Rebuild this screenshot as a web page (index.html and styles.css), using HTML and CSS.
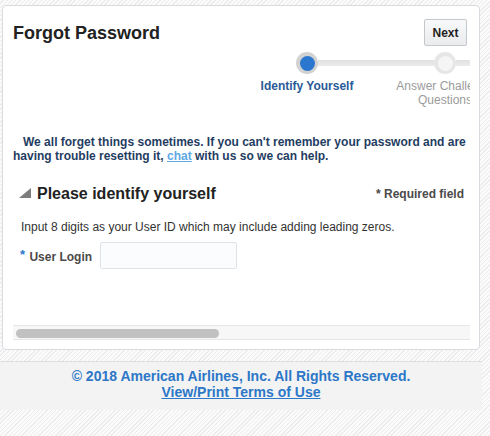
FILE: index.html
```html
<!DOCTYPE html>
<html lang="en">
<head>
<meta charset="utf-8">
<title>Forgot Password</title>
<link rel="stylesheet" href="styles.css">
</head>
<body>
<div class="page">
  <div class="card">
    <div class="viewport">
      <div class="header">
        <h1 class="title">Forgot Password</h1>
        <button class="btn" type="button">Next</button>
      </div>
      <div class="train">
        <div class="step current">
          <div class="knob-row">
            <span class="seg seg-none"></span>
            <span class="knob"><span class="dot"></span></span>
            <span class="seg"></span>
          </div>
          <div class="step-label">Identify Yourself</div>
        </div>
        <div class="step">
          <div class="knob-row">
            <span class="seg"></span>
            <span class="knob"><span class="dot"></span></span>
            <span class="seg"></span>
          </div>
          <div class="step-label">Answer Challenge Questions</div>
        </div>
      </div>
      <p class="intro">We all forget things sometimes. If you can't remember your password and are<br>having trouble resetting it, <a href="#" class="chat">chat</a> with us so we can help.</p>
      <div class="section">
        <div class="section-head">
          <h2 class="section-title"><svg class="disclosure" width="12" height="10" viewBox="0 0 12 10"><polygon points="12,0 12,10 0,10" fill="#7d7d7d"/></svg>Please identify yourself</h2>
          <span class="req">* Required field</span>
        </div>
        <p class="hint">Input 8 digits as your User ID which may include adding leading zeros.</p>
        <div class="field">
          <label class="field-label" for="login"><span class="star">*</span> User Login</label>
          <input class="input" id="login" type="text">
        </div>
      </div>
    </div>
    <div class="hscroll"><div class="thumb"></div></div>
  </div>
  <div class="footer">
    <div class="copy">© 2018 American Airlines, Inc. All Rights Reserved.</div>
    <a href="#" class="terms">View/Print Terms of Use</a>
  </div>
</div>
</body>
</html>
```

FILE: styles.css
```css
html, body {
  margin: 0;
  padding: 0;
}
body {
  font-family: "Liberation Sans", Arial, Helvetica, sans-serif;
  color: #333;
  height: 436px;
  background: repeating-linear-gradient(135deg, #fbfbfb 0 2px, #ececec 2px 3px);
}
.page {
  width: 482px;
  padding-top: 5px;
}
.card {
  margin-left: 2px;
  width: 478px;
  height: 345px;
  box-sizing: border-box;
  border: 1px solid #d8dce1;
  border-radius: 4px;
  background: #fff;
  display: flex;
  flex-direction: column;
  padding: 13px 9px 9px 10px;
}
.viewport {
  overflow: hidden;
  width: 457px;
}
.header {
  display: flex;
  justify-content: space-between;
  align-items: center;
  padding-right: 3px;
}
.title {
  margin: 0;
  font-size: 18px;
  line-height: 22px;
  font-weight: bold;
  color: #222;
}
.btn {
  width: 43px;
  height: 27px;
  padding: 0;
  border: 1px solid #c4c8cd;
  border-radius: 2px;
  background: linear-gradient(#f8f9fa, #e9ebed);
  font-family: inherit;
  font-size: 12px;
  font-weight: bold;
  color: #1f1f1f;
}
.train {
  display: flex;
  margin-top: 6px;
  margin-left: 225px;
  width: 276px;
}
.step {
  width: 138px;
  flex: none;
  display: flex;
  flex-direction: column;
  align-items: center;
}
.knob-row {
  display: flex;
  align-items: center;
  width: 100%;
  height: 22px;
}
.seg {
  flex: 1;
  height: 6px;
  background: linear-gradient(#e0e0e0, #ececec);
}
.seg-none {
  background: transparent;
}
.knob {
  width: 22px;
  height: 22px;
  border-radius: 50%;
  background: #e6e6e6;
  display: flex;
  align-items: center;
  justify-content: center;
  flex: none;
}
.dot {
  width: 15px;
  height: 15px;
  border-radius: 50%;
  background: #f5f5f5;
}
.current .knob {
  background: #d2d2d2;
}
.current .dot {
  background: #2b76cf;
}
.step-label {
  margin-top: 5px;
  font-size: 12px;
  line-height: 14px;
  color: #9b9b9b;
  text-align: center;
  width: 120px;
}
.current .step-label {
  font-weight: bold;
  color: #2b5b97;
  width: 138px;
}
.intro {
  margin: 28px 0 0;
  font-size: 12px;
  line-height: 14px;
  font-weight: bold;
  color: #1f3d62;
  text-indent: 10px;
  white-space: nowrap;
}
.chat {
  color: #5fa8e6;
  text-decoration: underline;
}
.section {
  margin-top: 20px;
  padding: 0 6px;
}
.section-head {
  display: flex;
  justify-content: space-between;
  align-items: center;
  height: 22px;
}
.section-title {
  margin: 0;
  font-size: 16px;
  line-height: 20px;
  font-weight: bold;
  color: #222;
  display: flex;
  align-items: center;
  gap: 6px;
}
.disclosure {
  display: block;
  margin-top: -2px;
}
.req {
  font-size: 12px;
  font-weight: bold;
  color: #4a4a4a;
}
.hint {
  margin: 15px 0 0 2px;
  font-size: 12px;
  line-height: 14px;
  color: #333;
}
.field {
  margin-top: 8px;
  display: flex;
  align-items: center;
  gap: 8px;
  padding-left: 1px;
}
.field-label {
  font-size: 12px;
  font-weight: bold;
  color: #4a4a4a;
}
.star {
  color: #2b76cf;
  font-size: 13px;
  vertical-align: 2px;
  margin-right: 1px;
}
.input {
  width: 137px;
  height: 27px;
  box-sizing: border-box;
  border: 1px solid #dfe3e8;
  border-radius: 2px;
  background: #fbfcfd;
  margin: 0;
}
.hscroll {
  margin-top: auto;
  width: 457px;
  height: 15px;
  box-sizing: border-box;
  border-top: 1px solid #e6e6e6;
  border-bottom: 1px solid #e6e6e6;
  background: #f7f7f7;
  padding: 3px 0 0 3px;
}
.thumb {
  width: 203px;
  height: 9px;
  border-radius: 5px;
  background: #c1c1c1;
}
.footer {
  margin-top: 11px;
  border-top: 1px solid #dedede;
  background: #f3f3f3;
  height: 49px;
  box-sizing: border-box;
  padding-top: 6px;
  text-align: center;
  font-size: 14px;
  line-height: 16px;
  font-weight: bold;
  color: #2c77c7;
}
.terms {
  color: #2c77c7;
  text-decoration: underline;
}
```
